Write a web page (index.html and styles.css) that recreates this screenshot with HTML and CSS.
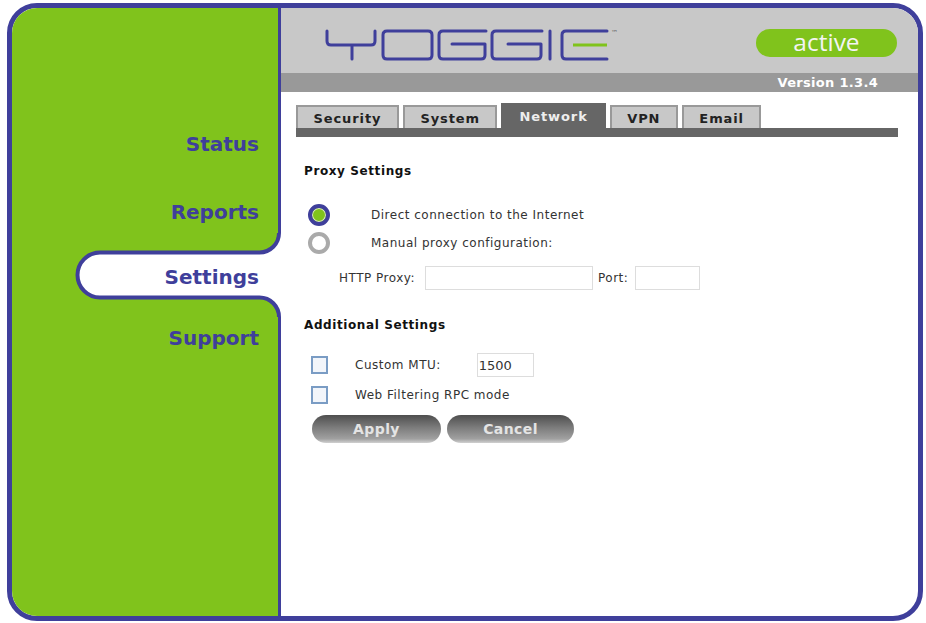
FILE: index.html
```html
<!DOCTYPE html>
<html lang="en">
<head>
  <meta charset="UTF-8">
  <title>Yoggie Settings</title>
  <link rel="stylesheet" href="styles.css">
</head>
<body>
  <div class="frame">
    <aside class="sidebar">
      <svg class="nav-shape" width="290" height="84" viewBox="0 -8 290 84">
        <path d="M274 -8 A19.5 19.5 0 0 1 254.5 11.5 H95 A22.5 22.5 0 0 0 95 56.5 H254.5 A19.5 19.5 0 0 1 274 76 H290 V-8 Z" fill="#fff"/>
        <path d="M274 -8 A19.5 19.5 0 0 1 254.5 11.5 H95 A22.5 22.5 0 0 0 95 56.5 H254.5 A19.5 19.5 0 0 1 274 76" fill="none" stroke="#3f3f9b" stroke-width="4"/>
      </svg>
      <nav class="nav">
        <a class="nav-item first">Status</a>
        <a class="nav-item">Reports</a>
        <a class="nav-item current">Settings</a>
        <a class="nav-item">Support</a>
      </nav>
    </aside>
    <main class="main">
      <header class="header">
        <svg class="logo" width="295" height="34" viewBox="0 0 295 34" role="img" aria-label="Yoggie">
          <g fill="none" stroke="#3f3f9b" stroke-width="3" stroke-linecap="round" stroke-linejoin="round">
            <path d="M2 3 V13 Q2 17 6 17 H46 Q50 17 50 13 V3 M27 17 V31"/>
            <path d="M62 3 H103 Q107 3 107 7 V27 Q107 31 103 31 H62 Q58 31 58 27 V7 Q58 3 62 3 Z"/>
            <path d="M161 3 H118 Q114 3 114 7 V27 Q114 31 118 31 H156 Q160 31 160 27 V16 H127"/>
            <path d="M217 3 H171 Q167 3 167 7 V27 Q167 31 171 31 H212 Q216 31 216 27 V16 H183"/>
            <path d="M225 3 V31"/>
            <path d="M282 3 H241 Q237 3 237 7 V27 Q237 31 241 31 H282"/>
          </g>
          <path d="M248 17 H282" fill="none" stroke="#80c31c" stroke-width="3"/>
          <text class="logo-tm" x="286" y="7">™</text>
        </svg>
        <span class="status-pill">active</span>
      </header>
      <div class="version-bar">Version 1.3.4</div>
      <div class="content">
        <div class="tabs">
          <a class="tab">Security</a>
          <a class="tab">System</a>
          <a class="tab selected">Network</a>
          <a class="tab">VPN</a>
          <a class="tab">Email</a>
        </div>

        <h2 class="section-title proxy-title">Proxy Settings</h2>
        <div class="radio-row">
          <span class="radio checked"></span>
          <span>Direct connection to the Internet</span>
        </div>
        <div class="radio-row">
          <span class="radio"></span>
          <span>Manual proxy configuration:</span>
        </div>
        <div class="proxy-row">
          <label class="proxy-label">HTTP Proxy:</label>
          <input class="text-input proxy-input" type="text">
          <label>Port:</label>
          <input class="text-input port-input" type="text">
        </div>

        <h2 class="section-title additional-title">Additional Settings</h2>
        <div class="check-row mtu-row">
          <span class="check"></span>
          <span class="check-label">Custom MTU:</span>
          <input class="text-input mtu-input" type="text" value="1500">
        </div>
        <div class="check-row">
          <span class="check"></span>
          <span class="check-label">Web Filtering RPC mode</span>
        </div>
        <div class="buttons">
          <button class="btn apply">Apply</button>
          <button class="btn cancel">Cancel</button>
        </div>
      </div>
    </main>
  </div>
</body>
</html>
```

FILE: styles.css
```css
/* General Styles */
html, body {
  height: 100%;
}

body {
  margin: 0;
  background: #fff;
  font-family: 'DejaVu Sans', Verdana, sans-serif;
  font-size: 12px;
  letter-spacing: 0.5px;
  color: #333;
  overflow: hidden;
}

.frame {
  box-sizing: border-box;
  display: flex;
  width: 916px;
  height: 618px;
  margin: 3px 0 0 7px;
  background: #fff;
  border: 5px solid #3f3f9b;
  border-radius: 30px;
  overflow: hidden;
}

/* Sidebar */
.sidebar {
  position: relative;
  flex: none;
  width: 266px;
  background: #80c31c;
  border-right: 3px solid #3f3f9b;
}

.nav-shape {
  position: absolute;
  left: -7px;
  top: 225px;
}

.nav {
  position: relative;
  display: flex;
  flex-direction: column;
  align-items: flex-end;
  padding: 116px 19px 0 0;
  letter-spacing: 0;
}

.nav-item {
  height: 65px;
  line-height: 40px;
  font-size: 20px;
  font-weight: bold;
  color: #3f3f9b;
}

.nav-item.first {
  margin-bottom: 3px;
}

.nav-item.current {
  margin-bottom: -4px;
}

/* Header */
.main {
  flex: 1;
  min-width: 0;
}

.header {
  box-sizing: border-box;
  display: flex;
  align-items: flex-start;
  justify-content: space-between;
  height: 65px;
  padding: 20px 21px 0 44px;
  background: #c8c8c8;
}

.logo-tm {
  font-size: 7px;
  letter-spacing: 0;
  fill: #666;
}

.status-pill {
  width: 141px;
  height: 28px;
  margin-top: 1px;
  border-radius: 14px;
  background: #80c31c;
  color: #f4f4f4;
  font-family: 'Open Sans', sans-serif;
  font-size: 24.5px;
  letter-spacing: 0;
  line-height: 26px;
  text-align: center;
}

.version-bar {
  height: 19px;
  padding-right: 40px;
  background: #999;
  color: #fff;
  font-size: 13px;
  font-weight: bold;
  letter-spacing: 0.3px;
  line-height: 20px;
  text-align: right;
}

/* Tabs */
.content {
  padding: 10px 0 0 15px;
}

.tabs {
  box-sizing: border-box;
  display: flex;
  align-items: flex-end;
  gap: 4px;
  width: 602px;
  height: 35px;
  border-bottom: 9px solid #666;
}

.tab {
  box-sizing: border-box;
  height: 23px;
  padding: 4px 15.5px 0;
  background: #c8c8c8;
  border: 2px solid #999;
  border-bottom: 0;
  color: #222;
  font-size: 13px;
  font-weight: bold;
  letter-spacing: 0.9px;
  line-height: 16px;
}

.tab.selected {
  height: 25px;
  padding: 6px 18px 0;
  background: #666;
  border: 0;
  color: #eee;
}

/* Form */
.section-title {
  margin: 0 0 0 8px;
  color: #111;
  font-size: 12px;
  font-weight: bold;
  letter-spacing: 0.6px;
}

.proxy-title {
  padding-top: 27px;
}

.additional-title {
  padding-top: 28px;
}

.radio-row {
  display: flex;
  align-items: center;
  gap: 41px;
  height: 28px;
  margin-left: 12px;
}

.proxy-title + .radio-row {
  margin-top: 23px;
}

.radio {
  box-sizing: border-box;
  flex: none;
  width: 22px;
  height: 22px;
  border: 4px solid #aaa;
  border-radius: 50%;
  background: #fff;
}

.radio.checked {
  border-color: #3f3f9b;
  background: #80c31c;
  box-shadow: inset 0 0 0 1px #dfe8c8;
}

.proxy-row {
  display: flex;
  align-items: center;
  gap: 5px;
  margin: 9px 0 0 43px;
}

.proxy-label {
  width: 81px;
}

.text-input {
  box-sizing: border-box;
  height: 24px;
  padding: 0 1px;
  background: #fff;
  border: 1px solid #ddd;
  font-family: inherit;
  font-size: 13px;
  color: #333;
  outline: none;
}

.proxy-input {
  width: 168px;
}

.port-input {
  width: 65px;
  margin-left: 2px;
}

.check-row {
  display: flex;
  align-items: center;
  gap: 27px;
  height: 30px;
  margin-left: 15px;
}

.mtu-row {
  margin-top: 18px;
}

.check {
  box-sizing: border-box;
  flex: none;
  width: 17px;
  height: 18px;
  background: #f2f5fa;
  border: 2px solid #7a9cc4;
}

.mtu-input {
  width: 57px;
  margin-left: 9px;
}

.buttons {
  display: flex;
  gap: 6px;
  margin: 5px 0 0 16px;
}

.btn {
  width: 129px;
  height: 28px;
  padding: 0;
  border: 0;
  border-radius: 14px;
  background: linear-gradient(#4e4e4e 0%, #7c7c7c 45%, #a0a0a0 85%, #d0d0d0 100%);
  color: #e4e4e4;
  font-family: inherit;
  font-size: 14px;
  font-weight: bold;
  letter-spacing: 0.4px;
}

.btn.cancel {
  width: 127px;
}
```
